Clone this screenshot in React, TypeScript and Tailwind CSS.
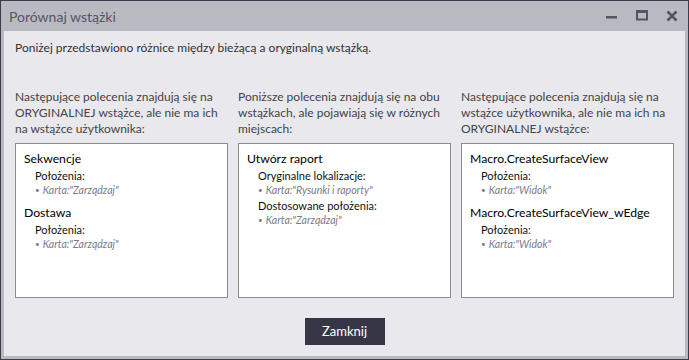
import React from 'react'

const font = { fontFamily: 'Lato, "Noto Sans", sans-serif' }

interface Group {
  label: string
  items: string[]
}

interface Entry {
  title: string
  groups: Group[]
}

const columns: { intro: string[]; entries: Entry[] }[] = [
  {
    intro: ['Następujące polecenia znajdują się na', 'ORYGINALNEJ wstążce, ale nie ma ich', 'na wstążce użytkownika:'],
    entries: [
      { title: 'Sekwencje', groups: [{ label: 'Położenia:', items: ['Karta:"Zarządzaj"'] }] },
      { title: 'Dostawa', groups: [{ label: 'Położenia:', items: ['Karta:"Zarządzaj"'] }] },
    ],
  },
  {
    intro: ['Poniższe polecenia znajdują się na obu', 'wstążkach, ale pojawiają się w różnych', 'miejscach:'],
    entries: [
      {
        title: 'Utwórz raport',
        groups: [
          { label: 'Oryginalne lokalizacje:', items: ['Karta:"Rysunki i raporty"'] },
          { label: 'Dostosowane położenia:', items: ['Karta:"Zarządzaj"'] },
        ],
      },
    ],
  },
  {
    intro: ['Następujące polecenia znajdują się na', 'wstążce użytkownika, ale nie ma ich na', 'ORYGINALNEJ wstążce:'],
    entries: [
      { title: 'Macro.CreateSurfaceView', groups: [{ label: 'Położenia:', items: ['Karta:"Widok"'] }] },
      { title: 'Macro.CreateSurfaceView_wEdge', groups: [{ label: 'Położenia:', items: ['Karta:"Widok"'] }] },
    ],
  },
]

function Panel({ entries }: { entries: Entry[] }) {
  return (
    <div className="h-[155px] border border-[#8b8b95] bg-white pt-[6px] pl-[8px]">
      {entries.map((e, i) => (
        <div key={e.title} className={i > 0 ? 'mt-[7px]' : ''}>
          <div className="text-[12.2px] leading-[18px] text-black">{e.title}</div>
          <div className="pl-[11px]">
            {e.groups.map((g, j) => (
              <div key={g.label} className={j > 0 ? 'mt-[2px]' : 'mt-px'}>
                <div className="text-[11px] leading-[14px] text-[#111]">{g.label}</div>
                {g.items.map((it) => (
                  <div key={it} className="flex items-center text-[10.5px] leading-[14px] italic text-[#7a7a88]">
                    <span className="mr-[3px] not-italic text-[8px]">•</span>
                    {it}
                  </div>
                ))}
              </div>
            ))}
          </div>
        </div>
      ))}
    </div>
  )
}

export default function App() {
  return (
    <div className="w-[689px] h-[360px] bg-[#3b3b4b] p-px" style={font}>
      <div className="h-full flex flex-col bg-[#b9b9c2] px-[3px] pb-[3px]">
        {/* Title bar */}
        <div className="h-[30px] flex items-center justify-between pl-[5px] pr-[5px]">
          <span className="text-[14px] text-[#55556a]">Porównaj wstążki</span>
          <div className="flex items-center gap-[18px] pr-[2px]">
            <svg width="12" height="12" viewBox="0 0 12 12">
              <rect x="0" y="6" width="11" height="2.5" fill="#55556a" />
            </svg>
            <svg width="12" height="12" viewBox="0 0 12 12">
              <rect x="1" y="1.5" width="10" height="8" fill="none" stroke="#55556a" strokeWidth="2" />
              <rect x="0" y="0" width="12" height="3" fill="#55556a" />
            </svg>
            <svg width="12" height="12" viewBox="0 0 12 12">
              <path d="M1.5 1.5 L10.5 10.5 M10.5 1.5 L1.5 10.5" stroke="#55556a" strokeWidth="2.6" />
            </svg>
          </div>
        </div>

        {/* Body */}
        <div className="flex-1 bg-[#e8e8ed] px-[11px] flex flex-col">
          <p className="pt-[9px] text-[12px] leading-[16px] text-[#333]">
            Poniżej przedstawiono różnice między bieżącą a oryginalną wstążką.
          </p>

          <div className="mt-[33px] grid grid-cols-3 gap-[10px]">
            {columns.map((c, i) => (
              <div key={i}>
                <div className="text-[12px] leading-[16px] text-[#444] whitespace-nowrap">
                  {c.intro.map((l) => (
                    <div key={l}>{l}</div>
                  ))}
                </div>
                <div className="mt-[6px]">
                  <Panel entries={c.entries} />
                </div>
              </div>
            ))}
          </div>

          <div className="mt-[20px] flex justify-center">
            <button className="w-[80px] h-[27px] bg-[#363646] text-white text-[13px]">Zamknij</button>
          </div>
        </div>
      </div>
    </div>
  )
}
